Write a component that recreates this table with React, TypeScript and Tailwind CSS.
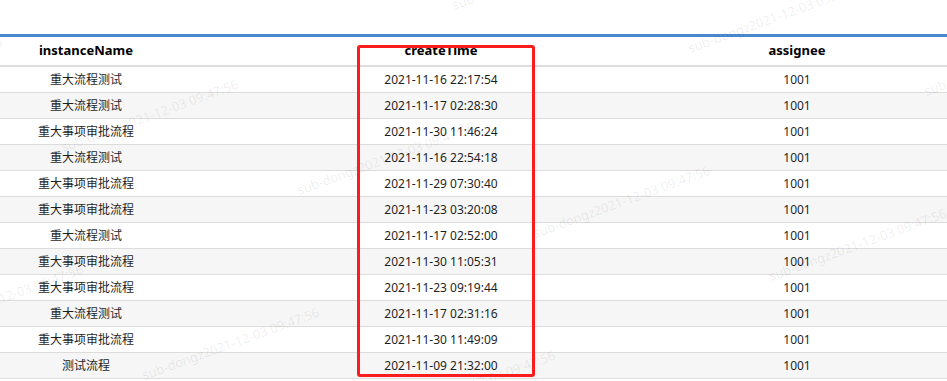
const rows: [string, string][] = [
  ["重大流程测试", "2021-11-16 22:17:54"],
  ["重大流程测试", "2021-11-17 02:28:30"],
  ["重大事项审批流程", "2021-11-30 11:46:24"],
  ["重大流程测试", "2021-11-16 22:54:18"],
  ["重大事项审批流程", "2021-11-29 07:30:40"],
  ["重大事项审批流程", "2021-11-23 03:20:08"],
  ["重大流程测试", "2021-11-17 02:52:00"],
  ["重大事项审批流程", "2021-11-30 11:05:31"],
  ["重大事项审批流程", "2021-11-23 09:19:44"],
  ["重大流程测试", "2021-11-17 02:31:16"],
  ["重大事项审批流程", "2021-11-30 11:49:09"],
  ["测试流程", "2021-11-09 21:32:00"],
];

// watermark rows: start point of each row, then repeat along (236, 43)
const markRows = [
  { x: 455, y: 12 },
  { x: -172, y: 111 },
  { x: -327, y: 296 },
];

function Watermark() {
  const marks: { x: number; y: number }[] = [];
  markRows.forEach((r) => {
    for (let i = 0; i < 6; i++) marks.push({ x: r.x + i * 236, y: r.y + i * 43 });
  });
  return (
    <div className="pointer-events-none absolute inset-0 overflow-hidden z-10">
      {marks.map((m, i) => (
        <span
          key={i}
          className="absolute whitespace-nowrap text-[13px] leading-none text-black/[0.08] origin-bottom-left -rotate-[20deg]"
          style={{ left: m.x, top: m.y - 13 }}
        >
          sub-dongz2021-12-03 09:47:56
        </span>
      ))}
    </div>
  );
}

export default function App() {
  return (
    <div
      className="relative w-[947px] h-[381px] overflow-hidden bg-white"
      style={{ fontFamily: '"Noto Sans", "Noto Sans CJK SC", sans-serif' }}
    >
      <div className="h-[34px]" />
      <div className="border-t-[3px] border-[#4a89d2]">
        <div className="grid grid-cols-[172px_538px_174px_1fr] h-[30px] border-b-2 border-[#dddddd] text-[13px] font-bold text-black">
          <div className="flex items-center justify-center">instanceName</div>
          <div className="flex items-center justify-center">createTime</div>
          <div className="flex items-center justify-center">assignee</div>
          <div />
        </div>
        {rows.map(([name, time], i) => (
          <div
            key={i}
            className={`grid grid-cols-[172px_538px_174px_1fr] h-[26px] border-b border-[#dcdcdc] text-[12px] text-[#1f1f1f] ${
              i % 2 === 1 ? "bg-[#f6f6f6]" : "bg-white"
            }`}
          >
            <div className="flex items-center justify-center">{name}</div>
            <div className="flex items-center justify-center">{time}</div>
            <div className="flex items-center justify-center">1001</div>
            <div />
          </div>
        ))}
      </div>

      <Watermark />

      {/* red annotation box round the createTime column */}
      <div className="absolute left-[357px] top-[45px] w-[178px] h-[332px] border-[3px] border-[#fb1d1d] rounded-[3px] z-20" />
    </div>
  );
}
